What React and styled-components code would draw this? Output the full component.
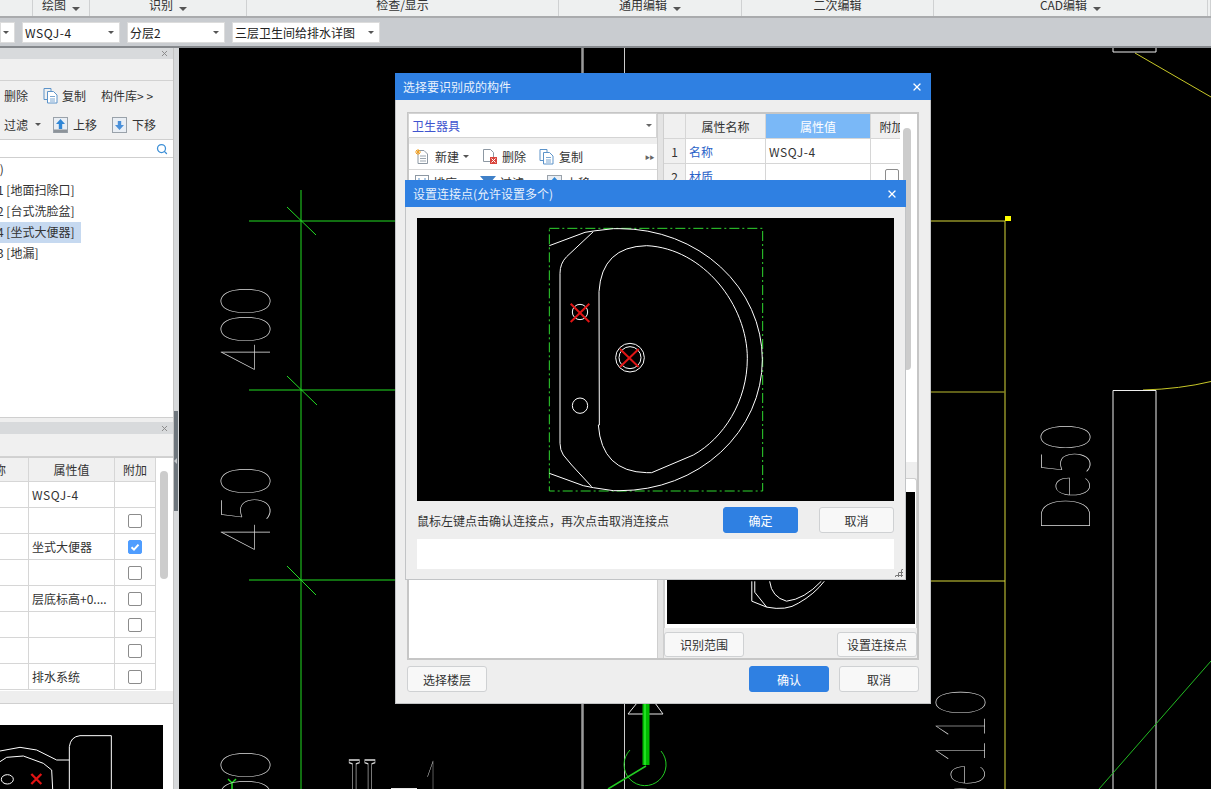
import React from 'react';
import styled, { createGlobalStyle } from 'styled-components';
import { Search, X } from 'lucide-react';

const GlobalStyle = createGlobalStyle`
  html, body {
    margin: 0;
    padding: 0;
    overflow: hidden;
    background: #000;
  }
  * { box-sizing: border-box; }
  body {
    font-family: "Noto Sans CJK SC", "Liberation Sans", sans-serif;
    font-size: 12px;
    color: #333;
  }
`;

const blue = '#2f80e2';

const Page = styled.div`
  position: relative;
  width: 1211px;
  height: 789px;
  overflow: hidden;
  display: flex;
  flex-direction: column;
`;

const Ribbon = styled.div`
  height: 18px;
  flex: none;
  display: grid;
  grid-template-columns: 33px 57px 157px 312px 183px 192px 274px 3px;
  background: #eef0f0;
  border-bottom: 2px solid #a9abad;
`;

const RibbonGroup = styled.div`
  height: 16px;
  overflow: hidden;
  display: flex;
  align-items: flex-end;
  justify-content: center;
  gap: 6px;
  border-right: 1px solid #cfd1d2;
  line-height: 12px;
  padding-bottom: 5px;
`;

const Caret = styled.i`
  display: block;
  flex: none;
  width: 0;
  height: 0;
  border-left: ${p => p.$size || 3}px solid transparent;
  border-right: ${p => p.$size || 3}px solid transparent;
  border-top: ${p => p.$size || 3}px solid ${p => p.$color || '#555'};
`;

const ToolStrip = styled.div`
  height: 30px;
  flex: none;
  display: flex;
  align-items: center;
  gap: 7px;
  padding-top: 1px;
  background: #c9ccd0;
  border-bottom: 2px solid #85888c;
`;

const ToolSelect = styled.div`
  width: ${p => p.$width}px;
  height: 21px;
  flex: none;
  display: flex;
  align-items: center;
  justify-content: space-between;
  padding: 0 5px 0 2px;
  background: #fff;
  border: 1px solid #dcdcdc;
  color: #222;
  white-space: nowrap;
`;

const Latin = styled.span`
  letter-spacing: 0.6px;
`;

const Workspace = styled.div`
  flex: 1;
  display: flex;
  min-height: 0;
`;

const SidePanel = styled.div`
  width: 174px;
  flex: none;
  display: flex;
  flex-direction: column;
  background: #eeeeee;
  border-right: 1px solid #c4c4c4;
`;

const PanelHead = styled.div`
  height: ${p => p.$height}px;
  flex: none;
  display: flex;
  align-items: center;
  justify-content: flex-end;
  padding-right: 4px;
  background: #d8dadc;
  color: #888;
`;

const SideBlank = styled.div`
  height: ${p => p.$height}px;
  flex: none;
  background: #f0f0f0;
  border-bottom: 1px solid #d2d2d2;
`;

const SideTools = styled.div`
  height: 29px;
  flex: none;
  display: flex;
  align-items: center;
  gap: 15px;
  padding-left: 4px;
  background: #f0f0f0;
  white-space: nowrap;
`;

const ToolButton = styled.span`
  display: inline-flex;
  align-items: center;
  gap: ${p => p.$gap ?? 5}px;
  margin-right: ${p => p.$after || 0}px;
  color: #333;
`;

const SearchBox = styled.div`
  height: 19px;
  flex: none;
  display: flex;
  align-items: center;
  justify-content: flex-end;
  padding-right: 5px;
  background: #fff;
  border-top: 1px solid #cfcfcf;
  border-bottom: 1px solid #cfcfcf;
  color: #3d8fd6;
`;

const Tree = styled.div`
  height: 260px;
  flex: none;
  padding-top: 1px;
  background: #fff;
  border-bottom: 1px solid #cfcfcf;
`;

const TreeRow = styled.div`
  width: 81px;
  height: 21px;
  line-height: 20px;
  overflow: visible;
  white-space: nowrap;
  background: ${p => (p.$selected ? '#c6d9f0' : 'transparent')};
  text-indent: -3px;
`;

const SideGap = styled.div`
  height: 4px;
  flex: none;
`;

const SideTableWrap = styled.div`
  height: 234px;
  flex: none;
  display: flex;
  overflow: hidden;
  background: #fff;
  border-top: 1px solid #d0d0d0;
`;

const SideGrid = styled.div`
  width: 156px;
  flex: none;
  display: grid;
  grid-template-columns: 29px 86px 41px;
  grid-auto-rows: 26px;
  grid-template-rows: 24px;
`;

const GridCell = styled.div`
  display: flex;
  align-items: center;
  justify-content: ${p => (p.$center ? 'center' : 'flex-start')};
  padding-left: ${p => (p.$center ? 0 : 3)}px;
  overflow: hidden;
  white-space: nowrap;
  border-right: 1px solid #d6d6d6;
  border-bottom: 1px solid #d6d6d6;
  background: ${p => (p.$head ? '#f0f0f0' : '#fff')};
  color: ${p => p.$color || '#333'};
`;

const ClippedLabel = styled.span`
  flex: none;
  margin-left: -21px;
`;

const ScrollTrack = styled.div`
  flex: 1;
  padding: ${p => p.$top}px 0 0 ${p => p.$left}px;
  background: #fff;
`;

const ScrollThumb = styled.div`
  width: 8px;
  height: ${p => p.$height}px;
  border-radius: 4px;
  background: #cccccc;
`;

const SideFoot = styled.div`
  height: 13px;
  flex: none;
  border-bottom: 1px solid #d0d0d0;
`;

const PreviewCard = styled.div`
  flex: 1;
  padding-top: 21px;
  background: #fff;
  overflow: hidden;
`;

const SidePreview = styled.svg`
  display: block;
  width: 163px;
  height: 64px;
  background: #000;
`;

const Splitter = styled.div`
  width: 5px;
  flex: none;
  padding-top: 363px;
  background: #d6d8da;
`;

const SplitterHandle = styled.div`
  width: 4px;
  height: 100px;
  display: flex;
  align-items: center;
  background: #6e767d;
  &::before {
    content: '';
    border-top: 3px solid transparent;
    border-bottom: 3px solid transparent;
    border-right: 3px solid #c4c8cb;
  }
`;

const Canvas = styled.div`
  flex: 1;
  background: #000;
  overflow: hidden;
`;

const CadDrawing = styled.svg`
  display: block;
  width: 1032px;
  height: 741px;
  text {
    fill: #dcdcdc;
    font-family: "Lato", "Roboto", "Liberation Sans", sans-serif;
    font-weight: 100;
    font-size: 71px;
  }
  text.serif {
    fill: none;
    stroke: #d8d8d8;
    stroke-width: 1px;
    vector-effect: non-scaling-stroke;
    font-family: "Liberation Serif", serif;
    font-weight: 400;
    font-size: 100px;
  }
  line, polyline, path, rect, circle {
    vector-effect: non-scaling-stroke;
  }
`;

const Dialog = styled.div`
  position: absolute;
  left: ${p => p.$left}px;
  top: ${p => p.$top}px;
  width: ${p => p.$width}px;
  height: ${p => p.$height}px;
  background: #eeeeee;
  border: 1px solid #c2c4c6;
  border-top: 0;
  display: flex;
  flex-direction: column;
`;

const DialogTitle = styled.div`
  height: 27px;
  flex: none;
  margin: 0 -1px;
  display: flex;
  align-items: center;
  justify-content: space-between;
  padding: 0 8px 0 ${p => p.$indent}px;
  background: ${blue};
  color: #e8f1fc;
`;

const MainBody = styled.div`
  flex: 1;
  display: flex;
  flex-direction: column;
  padding: 12px 11px 0 11px;
`;

const Frame = styled.div`
  height: 548px;
  flex: none;
  display: flex;
  border: 2px solid #c6c6c6;
`;

const FrameLeft = styled.div`
  width: 248px;
  flex: none;
  display: flex;
  flex-direction: column;
  gap: 6px;
  margin-top: -1px;
`;

const Combo = styled.div`
  height: 25px;
  flex: none;
  margin-left: -1px;
  display: flex;
  align-items: center;
  justify-content: space-between;
  padding: 0 4px 0 3px;
  background: #fff;
  border: 1px solid #d4d4d4;
  color: #3f55cf;
`;

const ToolStack = styled.div`
  flex: none;
  display: flex;
  flex-direction: column;
`;

const DialogTools = styled.div`
  height: 26px;
  display: flex;
  align-items: center;
  justify-content: space-between;
  padding: 0 3px 0 6px;
  background: #fff;
  border-bottom: 1px solid #d8d8d8;
`;

const ToolGroup = styled.div`
  display: flex;
  align-items: center;
  gap: 13px;
`;

const MoreArrows = styled.span`
  font-size: 5px;
  letter-spacing: -0.5px;
  color: #666;
`;

const WhiteList = styled.div`
  flex: 1;
  background: #fff;
`;

const FrameSplit = styled.div`
  width: 7px;
  flex: none;
  background: #e4e4e4;
  border-left: 1px solid #cfcfcf;
  border-right: 1px solid #cfcfcf;
`;

const FrameRight = styled.div`
  flex: 1;
  min-width: 0;
  display: flex;
  flex-direction: column;
`;

const PropsWrap = styled.div`
  height: 348px;
  flex: none;
  display: flex;
  background: #fff;
`;

const PropsGrid = styled.div`
  width: 236px;
  flex: none;
  overflow: hidden;
  display: grid;
  grid-template-columns: 22px 80px 105px 42px;
  grid-template-rows: 25px;
  grid-auto-rows: 25px;
`;

const PropsHead = styled(GridCell)`
  justify-content: center;
  padding-left: 0;
  background: ${p => (p.$active ? '#7ab8f7' : '#f0f0f0')};
  color: ${p => (p.$active ? '#fff' : '#333')};
`;

const PreviewWrap = styled.div`
  height: 150px;
  flex: none;
  margin: 16px 0 0 0;
  padding: 13px 1px 4px 2px;
  background: #fff;
  border: 1px solid #cfcfcf;
  border-bottom: 0;
  border-radius: 3px 3px 0 0;
`;

const MiniPreview = styled.svg`
  display: block;
  width: 100%;
  height: 100%;
  background: #000;
`;

const ButtonRow = styled.div`
  margin-top: ${p => p.$top || 0}px;
  display: flex;
  align-items: center;
  justify-content: space-between;
`;

const ButtonGroup = styled.div`
  display: flex;
  gap: ${p => p.$gap}px;
`;

const Button = styled.div`
  width: ${p => p.$width || 80}px;
  height: ${p => p.$height || 25}px;
  display: flex;
  align-items: center;
  justify-content: center;
  border-radius: 3px;
  border: 1px solid ${p => (p.$primary ? blue : '#cfd1d3')};
  background: ${p => (p.$primary ? blue : '#f8f8f8')};
  color: ${p => (p.$primary ? '#fff' : '#333')};
`;

const ConnectBody = styled.div`
  flex: 1;
  position: relative;
  display: flex;
  flex-direction: column;
  padding: 11px 11px 0 11px;
`;

const SinkCanvas = styled.svg`
  display: block;
  width: 477px;
  height: 283px;
  flex: none;
  background: #000;
  line, polyline, path, rect, circle {
    vector-effect: non-scaling-stroke;
  }
`;

const HintRow = styled.div`
  margin-top: 6px;
  height: 26px;
  flex: none;
  display: flex;
  align-items: center;
  justify-content: space-between;
`;

const WhiteStrip = styled.div`
  margin-top: 6px;
  height: 30px;
  flex: none;
  background: #fff;
`;

const ResizeGrip = styled.div`
  position: absolute;
  right: 2px;
  bottom: 2px;
  width: 9px;
  height: 9px;
  background-image: radial-gradient(#777 1px, transparent 1.2px);
  background-size: 3px 3px;
  clip-path: polygon(100% 0, 100% 100%, 0 100%);
`;

const CheckBox = styled.span`
  width: 14px;
  height: 14px;
  display: flex;
  align-items: center;
  justify-content: center;
  border-radius: 2px;
  border: 1px solid ${p => (p.$checked ? '#4f9dff' : '#8c8c8c')};
  background: ${p => (p.$checked ? '#4f9dff' : '#fff')};
`;

const Check = ({ checked }) => (
  <CheckBox $checked={checked}>
    {checked && (
      <svg width="10" height="10" viewBox="0 0 10 10">
        <path d="M1.5 5.2 4 7.6 8.5 2.6" fill="none" stroke="#fff" strokeWidth="2" />
      </svg>
    )}
  </CheckBox>
);

const NewIcon = () => (
  <svg width="16" height="16" viewBox="0 0 16 16">
    <path d="M3 1.5h6l3.5 3.5v9.5H3z" fill="#fff" stroke="#8d98a3" />
    <path d="M5 7h6M5 9.5h6M5 12h6" stroke="#9aa5af" />
    <path d="M1 1l4 4M5 1 1 5M3 0v6M0 3h6" stroke="#f2a227" />
  </svg>
);

const DeleteIcon = () => (
  <svg width="16" height="16" viewBox="0 0 16 16">
    <path d="M1.5.5h7l3 3v9h-10z" fill="#fff" stroke="#8d98a3" />
    <rect x="8" y="8" width="7" height="7" fill="#d9453d" />
    <path d="M9.5 9.5l4 4m0-4-4 4" stroke="#fff" />
  </svg>
);

const CopyIcon = () => (
  <svg width="16" height="16" viewBox="0 0 16 16">
    <path d="M1 .5h7v3M1 .5v11h3" fill="none" stroke="#5c93c9" />
    <path d="M4.500 3.500h6l3.500 3.500v8h-9.500z" fill="#fff" stroke="#5c93c9" />
    <path d="M7 8.500h5M7 11h5M7 13h5" stroke="#7ba6d1" />
  </svg>
);

const MoveIcon = ({ down }) => (
  <svg width="15" height="16" viewBox="0 0 15 16">
    <rect x=".5" y=".5" width="14" height="15" fill="#e9eef4" stroke="#9aa2aa" />
    {down ? (
      <path d="M7.500 13 3 8h2.800V4h3.400v4H12z" fill="#4a90d9" />
    ) : (
      <path d="M7.500 2 12 7H9.200v5H5.800V7H3z" fill="#2f86d6" />
    )}
    {!down && <rect x="1" y="12.500" width="13" height="3" fill="#8d9399" />}
  </svg>
);

const SortIcon = () => (
  <svg width="14" height="16" viewBox="0 0 14 16">
    <rect x=".5" y=".5" width="13" height="15" fill="#fff" stroke="#8d98a3" />
    <path d="M4 3v9M10 3v9" stroke="#5c93c9" />
  </svg>
);

const FilterIcon = () => (
  <svg width="16" height="16" viewBox="0 0 16 16">
    <path d="M0 1h16l-6 7v7H6V8z" fill="#3f80c8" />
  </svg>
);

const CadLines = ({ d, color = '#22dd22', width = 1 }) => (
  <path d={d} fill="none" stroke={color} strokeWidth={width} />
);

const CadText = ({ x, y, sx, end, children }) => (
  <text
    transform={`translate(${x},${y}) rotate(-90) scale(${sx},1)`}
    textAnchor={end ? 'end' : 'start'}
  >
    {children}
  </text>
);

const Drawing = () => (
  <CadDrawing viewBox="179 48 1032 741">
    <CadLines d="M301 190V789M249 221H396M249 390H396M249 580H396" />
    <CadLines d="M287 207 316 235M287 376 317 405M287 566 316 595" />
    <CadLines d="M232 789V783M228 779 232 783 236 779" width={1.5} />
    <CadText x={270} y={371} sx={0.68}>400</CadText>
    <CadText x={270} y={551} sx={0.68}>450</CadText>
    <CadText x={270} y={751} sx={0.68} end>500</CadText>
    <CadText x={985} y={690} sx={0.6} end>De110</CadText>
    <CadText x={1090} y={531} sx={0.62}>De50</CadText>
    <text className="serif" transform="translate(348,825) scale(.39,1)">H</text>
    <rect x="391" y="788" width="26" height="1" fill="#e6e6e6" />
    <text transform="translate(424,823) scale(.4,1.25)">1</text>
    <CadLines d="M930 221H1005V789M930 581H1005" color="#d8d83a" />
    <CadLines d="M930 392H1005" color="#7f7f20" width={1.5} />
    <rect x="1005" y="216" width="6" height="5" fill="#ffff00" />
    <CadLines d="M1135 53 1211 97" color="#c8c828" />
    <CadLines d="M1143 390Q1180 389 1211 381.500" color="#c8c828" />
    <CadLines d="M1113 48V52H1156V48M1113 789V390.500H1156V789" color="#eeeeee" />
    <CadLines d="M1099 789 1211 661" color="#22bb22" />
    <CadLines d="M582.500 48V73M582.500 703V789" color="#9a9a9a" width={2.500} />
    <CadLines d="M624.500 48V73M624.500 703V789" color="#cccccc" />
    <CadLines d="M628 714H663M628 714 637 703M663 714 655 703" color="#e6e6e6" />
    <rect x="642.500" y="703" width="7" height="62" fill="#00bb00" />
    <rect x="644" y="703" width="2" height="62" fill="#22e022" />
    <CadLines d="M630 750A21 21 0 1 0 661 751" color="#22cc22" />
    <CadLines d="M646 766 608 789" color="#22cc22" width={1.500} />
  </CadDrawing>
);

const sinkOuter = 'M58 92 165 52 190 48 250 41H270A427 393 0 0 1 270 827H250L190 818 160 812 58 775';
const sinkEdge = 'M190 50 110 125Q90 145 90 175V685Q90 705 100 720L125 750 185 815';
const sinkBowl = 'M207 230Q215 95 350 92C520 100 652 270 652 430 652 560 580 670 490 720L365 773H350Q215 770 205 630H208Z';

const SinkDrawing = () => (
  <SinkCanvas viewBox="-339 9 1431 849">
    <rect x="58" y="40" width="640" height="788" fill="none" stroke="#2fd62f" strokeDasharray="10 3 2 3" />
    <path d={sinkOuter} fill="none" stroke="#fff" />
    <path d={sinkEdge} fill="none" stroke="#fff" />
    <path d={sinkBowl} fill="none" stroke="#fff" />
    <circle cx="150" cy="291" r="23" fill="none" stroke="#fff" />
    <circle cx="150" cy="572" r="23" fill="none" stroke="#fff" />
    <circle cx="300" cy="428" r="43" fill="none" stroke="#fff" />
    <circle cx="300" cy="428" r="33" fill="none" stroke="#fff" />
    <path d="M122 266 178 321M178 266 122 321M270 402 326 456M326 402 270 456" stroke="#e01414" strokeWidth="2" />
  </SinkCanvas>
);

const sideRows = [
  [<Latin key="v">WSQJ-4</Latin>, null],
  ['', false],
  ['坐式大便器', true],
  ['', false],
  ['层底标高+0....', false],
  ['', false],
  ['', false],
  ['排水系统', false],
];

const ribbonGroups = [
  ['', false],
  ['绘图', true],
  ['识别', true],
  ['检查/显示', false],
  ['通用编辑', true],
  ['二次编辑', false],
  ['CAD编辑', true],
  ['', false],
];

export default function App() {
  return (
    <Page>
      <GlobalStyle />
      <Ribbon>
        {ribbonGroups.map(([label, menu], i) => (
          <RibbonGroup key={i}>
            {label}
            {menu && <Caret $size={4} />}
          </RibbonGroup>
        ))}
      </Ribbon>
      <ToolStrip>
        <ToolSelect $width={15}><span /><Caret /></ToolSelect>
        <ToolSelect $width={98}><Latin>WSQJ-4</Latin><Caret /></ToolSelect>
        <ToolSelect $width={98}>分层2<Caret /></ToolSelect>
        <ToolSelect $width={148}>三层卫生间给排水详图<Caret /></ToolSelect>
      </ToolStrip>
      <Workspace>
        <SidePanel>
          <PanelHead $height={11}><X size={9} strokeWidth={2.5} /></PanelHead>
          <SideBlank $height={22} />
          <SideTools>
            <ToolButton>删除</ToolButton>
            <ToolButton $gap={3}><CopyIcon />复制</ToolButton>
            <ToolButton>构件库&gt; &gt;</ToolButton>
          </SideTools>
          <SideTools>
            <ToolButton $gap={7} $after={-3}>过滤<Caret /></ToolButton>
            <ToolButton><MoveIcon />上移</ToolButton>
            <ToolButton><MoveIcon down />下移</ToolButton>
          </SideTools>
          <SearchBox><Search size={12} strokeWidth={2.5} /></SearchBox>
          <Tree>
            <TreeRow>&nbsp;)</TreeRow>
            <TreeRow>1 [地面扫除口]</TreeRow>
            <TreeRow>2 [台式洗脸盆]</TreeRow>
            <TreeRow $selected>4 [坐式大便器]</TreeRow>
            <TreeRow>3 [地漏]</TreeRow>
          </Tree>
          <SideGap />
          <PanelHead $height={12}><X size={9} strokeWidth={2.5} /></PanelHead>
          <SideBlank $height={23} />
          <SideTableWrap>
            <SideGrid>
              <GridCell $head><ClippedLabel>名称</ClippedLabel></GridCell>
              <GridCell $head $center>属性值</GridCell>
              <GridCell $head $center>附加</GridCell>
              {sideRows.map(([value, checked], i) => (
                <React.Fragment key={i}>
                  <GridCell />
                  <GridCell>{value}</GridCell>
                  <GridCell $center>{checked !== null && <Check checked={checked} />}</GridCell>
                </React.Fragment>
              ))}
            </SideGrid>
            <ScrollTrack $top={13} $left={4}><ScrollThumb $height={108} /></ScrollTrack>
          </SideTableWrap>
          <SideFoot />
          <PreviewCard>
            <SidePreview viewBox="0 105 489 192">
              <path
                d="M208 297V170Q212 140 240 137H334V297M0 183 60 172 110 180 170 210H208M0 215 20 202 70 198 130 220 155 240 158 297"
                fill="none"
                stroke="#fff"
                strokeWidth="3"
              />
              <ellipse cx="22" cy="268" rx="18" ry="14" fill="none" stroke="#fff" strokeWidth="3" />
              <path d="M94 252 124 282M124 252 94 282" stroke="#e01414" strokeWidth="7" />
            </SidePreview>
          </PreviewCard>
        </SidePanel>
        <Splitter><SplitterHandle /></Splitter>
        <Canvas><Drawing /></Canvas>
      </Workspace>

      <Dialog $left={395} $top={73} $width={536} $height={631}>
        <DialogTitle $indent={8}>
          选择要识别成的构件
          <X size={12} strokeWidth={2.5} color="#fff" />
        </DialogTitle>
        <MainBody>
          <Frame>
            <FrameLeft>
              <Combo>卫生器具<Caret $color="#666" /></Combo>
              <ToolStack>
                <DialogTools>
                  <ToolGroup>
                    <ToolButton $gap={4}><NewIcon />新建<Caret /></ToolButton>
                    <ToolButton $gap={4}><DeleteIcon />删除</ToolButton>
                    <ToolButton $gap={4}><CopyIcon />复制</ToolButton>
                  </ToolGroup>
                  <MoreArrows>▶▶</MoreArrows>
                </DialogTools>
                <DialogTools>
                  <ToolGroup>
                    <ToolButton $gap={4}><SortIcon />排序<Caret /></ToolButton>
                    <ToolButton $gap={4}><FilterIcon />过滤<Caret /></ToolButton>
                    <ToolButton $gap={4}><MoveIcon />上移</ToolButton>
                  </ToolGroup>
                </DialogTools>
              </ToolStack>
              <WhiteList />
            </FrameLeft>
            <FrameSplit />
            <FrameRight>
              <PropsWrap>
                <PropsGrid>
                  <PropsHead />
                  <PropsHead>属性名称</PropsHead>
                  <PropsHead $active>属性值</PropsHead>
                  <PropsHead>附加</PropsHead>
                  <GridCell $head $center>1</GridCell>
                  <GridCell $color="#2a62c8">名称</GridCell>
                  <GridCell><Latin>WSQJ-4</Latin></GridCell>
                  <GridCell />
                  <GridCell $head $center>2</GridCell>
                  <GridCell $color="#2a62c8">材质</GridCell>
                  <GridCell />
                  <GridCell $center><Check /></GridCell>
                </PropsGrid>
                <ScrollTrack $top={14} $left={3}><ScrollThumb $height={242} /></ScrollTrack>
              </PropsWrap>
              <PreviewWrap>
                <MiniPreview viewBox="0 0 249 133">
                  <path
                    d="M85 90V110L100 116Q120 120 132 112 148 103 158 90M88 90V101L100 116M103 90Q105 106 120 110 138 108 155 90"
                    fill="none"
                    stroke="#fff"
                  />
                </MiniPreview>
              </PreviewWrap>
              <ButtonRow $top={4}>
                <Button>识别范围</Button>
                <Button>设置连接点</Button>
              </ButtonRow>
            </FrameRight>
          </Frame>
          <ButtonRow $top={6}>
            <Button $height={26}>选择楼层</Button>
            <ButtonGroup $gap={10}>
              <Button $primary $height={26}>确认</Button>
              <Button $height={26}>取消</Button>
            </ButtonGroup>
          </ButtonRow>
        </MainBody>

        <Dialog $left={9} $top={107} $width={501} $height={400}>
          <DialogTitle $indent={8}>
            设置连接点(允许设置多个)
            <X size={12} strokeWidth={2.5} color="#fff" />
          </DialogTitle>
          <ConnectBody>
            <SinkDrawing />
            <HintRow>
              鼠标左键点击确认连接点，再次点击取消连接点
              <ButtonGroup $gap={21}>
                <Button $primary $width={75} $height={26}>确定</Button>
                <Button $width={75} $height={26}>取消</Button>
              </ButtonGroup>
            </HintRow>
            <WhiteStrip />
            <ResizeGrip />
          </ConnectBody>
        </Dialog>
      </Dialog>
    </Page>
  );
}
